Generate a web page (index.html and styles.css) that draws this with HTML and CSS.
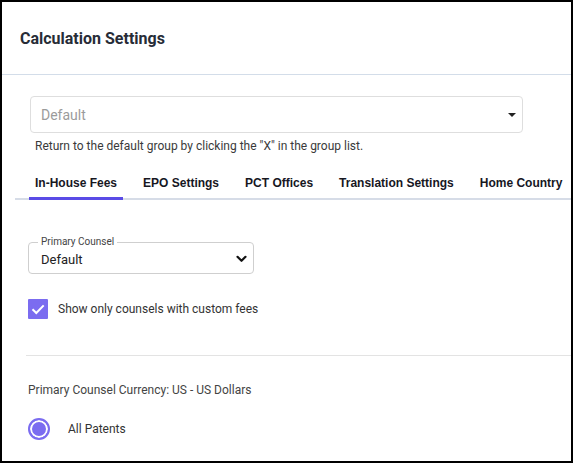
FILE: index.html
```html
<!DOCTYPE html>
<html lang="en">
<head>
<meta charset="utf-8">
<title>Calculation Settings</title>
<link rel="stylesheet" href="styles.css">
</head>
<body>
<div class="frame">
  <header class="head">
    <h1 class="title">Calculation Settings</h1>
  </header>
  <main class="content">
    <div class="group-select">
      <span class="placeholder">Default</span>
      <svg class="caret" width="8" height="4" viewBox="0 0 8 4"><path d="M0 0h8L4 4z" fill="#222"/></svg>
    </div>
    <p class="hint">Return to the default group by clicking the "X" in the group list.</p>

    <nav class="tabs">
      <a class="tab active">In-House Fees</a>
      <a class="tab">EPO Settings</a>
      <a class="tab">PCT Offices</a>
      <a class="tab">Translation Settings</a>
      <a class="tab">Home Country</a>
    </nav>

    <section class="panel">
      <div class="outlined">
        <span class="outlined-label">Primary Counsel</span>
        <span class="outlined-value">Default</span>
        <svg class="chevron" width="11" height="8" viewBox="0 0 11 8"><path d="M1.5 1.8l4 4 4-4" fill="none" stroke="#111" stroke-width="2.2" stroke-linecap="round" stroke-linejoin="round"/></svg>
      </div>

      <label class="check">
        <span class="check-box">
          <svg width="20" height="20" viewBox="0 0 20 20"><path d="M4.5 10.2l3.8 3.8 7.4-7.6" fill="none" stroke="#fff" stroke-width="2"/></svg>
        </span>
        <span>Show only counsels with custom fees</span>
      </label>

      <hr class="rule">

      <p class="currency">Primary Counsel Currency: US - US Dollars</p>

      <label class="radio">
        <span class="radio-dot"></span>
        <span>All Patents</span>
      </label>
    </section>
  </main>
</div>
</body>
</html>
```

FILE: styles.css
```css
* { box-sizing: border-box; }

html, body {
  margin: 0;
  padding: 0;
  background: #fff;
}

body {
  font-family: Roboto, "Liberation Sans", sans-serif;
  color: #333;
}

.frame {
  width: 573px;
  height: 463px;
  border: 2px solid #000;
  overflow: hidden;
  background: #fff;
}

/* header bar */
.head {
  height: 73px;
  display: flex;
  align-items: center;
  padding-left: 18px;
  border-bottom: 1px solid #d3dde9;
}

.title {
  margin: 0;
  font-size: 16px;
  font-weight: 700;
  color: #272c37;
}

.content {
  padding-left: 26px;
}

/* group picker */
.group-select {
  margin: 21px 0 0 2px;
  width: 493px;
  height: 37px;
  border: 1px solid #dedede;
  border-radius: 4px;
  display: flex;
  align-items: center;
  padding: 0 6px 0 10px;
}

.placeholder {
  font-size: 14px;
  color: #9b9b9b;
}

.caret {
  margin-left: auto;
}

.hint {
  margin: 6px 0 0 7px;
  font-size: 12px;
  line-height: 14px;
  color: #3a3a3a;
}

/* tabs */
.tabs {
  margin: 13px 0 0 -13px;
  padding-left: 14px;
  display: flex;
  gap: 14px;
  border-bottom: 2px solid #d6dce7;
  white-space: nowrap;
}

.tab {
  font-family: "Liberation Sans", Arial, sans-serif;
  font-size: 12px;
  font-weight: 700;
  line-height: 14px;
  color: #17171f;
  padding: 10px 6px 8px;
  margin-bottom: -2px;
  border-bottom: 2px solid transparent;
  flex: none;
}

.tab.active {
  border-bottom: 3px solid #5a4be6;
  padding-bottom: 7px;
}

/* panel contents */
.panel {
  padding-top: 42px;
}

.outlined {
  position: relative;
  width: 226px;
  height: 32px;
  border: 1px solid #cfcfcf;
  border-radius: 4px;
  display: flex;
  align-items: center;
  padding: 2px 6px 0 12px;
}

.outlined-label {
  position: absolute;
  top: -7px;
  left: 9px;
  padding: 0 3px;
  background: #fff;
  font-size: 10px;
  line-height: 12px;
  color: #444;
}

.outlined-value {
  font-size: 13px;
  color: #222;
}

.chevron {
  margin-left: auto;
}

.check {
  margin-top: 25px;
  display: flex;
  align-items: center;
  gap: 10px;
  font-size: 12px;
  color: #333;
}

.check-box {
  width: 20px;
  height: 20px;
  border-radius: 1px;
  background: #7b6cf0;
  display: flex;
}

.rule {
  margin: 36px 0 0 -2px;
  border: 0;
  border-top: 1px solid #e3e3e3;
}

.currency {
  margin: 27px 0 0;
  font-size: 12px;
  line-height: 14px;
  color: #444;
}

.radio {
  margin-top: 21px;
  display: flex;
  align-items: center;
  gap: 18px;
  font-size: 12px;
  color: #333;
}

.radio-dot {
  width: 22px;
  height: 22px;
  border-radius: 50%;
  border: 2px solid #7b6cf0;
  background: #7b6cf0;
  box-shadow: inset 0 0 0 2px #fff;
  flex: none;
}
```
